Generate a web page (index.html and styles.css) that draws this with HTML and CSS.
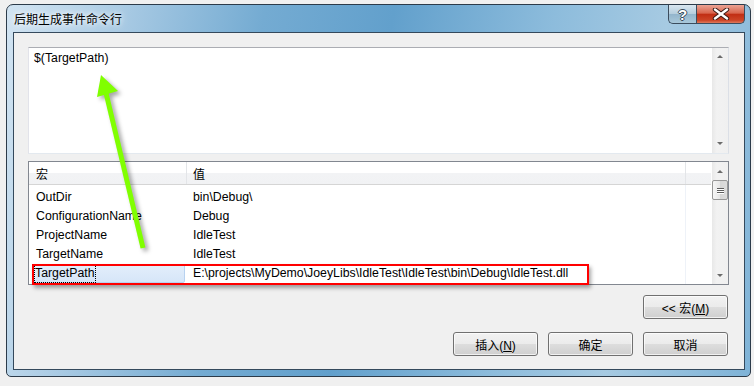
FILE: index.html
```html
<!DOCTYPE html>
<html lang="zh-CN">

<head>
    <meta charset="UTF-8">
    <title>后期生成事件命令行</title>
    <link rel="stylesheet" href="styles.css">
</head>

<body>
    <div class="window">
        <div class="titlebar">
            <span class="title">后期生成事件命令行</span>
            <div class="caption">
                <span class="cap-btn cap-help">?</span>
                <span class="cap-btn cap-close">
                    <svg width="20" height="12" viewBox="0 0 20 12">
                        <path d="M4 1.5 L16 10.5 M16 1.5 L4 10.5" stroke="#3a1a14" stroke-width="4.4" stroke-linecap="round" />
                        <path d="M4 1.5 L16 10.5 M16 1.5 L4 10.5" stroke="#fff" stroke-width="2.4" stroke-linecap="round" />
                    </svg>
                </span>
            </div>
        </div>

        <div class="client">
            <!-- 命令行编辑框 -->
            <div class="editbox">
                <div class="edit-text">$(TargetPath)</div>
                <div class="vscroll">
                    <span class="arr arr-up"></span>
                    <span class="arr arr-down"></span>
                </div>
            </div>

            <!-- 宏列表 -->
            <div class="listview">
                <div class="list-main">
                    <div class="list-head">
                        <div class="col c1">宏</div>
                        <div class="col c2">值</div>
                        <div class="col c3"></div>
                    </div>
                    <div class="list-body">
                        <div class="row"><div class="cell c1">OutDir</div><div class="cell c2">bin\Debug\</div></div>
                        <div class="row"><div class="cell c1">ConfigurationName</div><div class="cell c2">Debug</div></div>
                        <div class="row"><div class="cell c1">ProjectName</div><div class="cell c2">IdleTest</div></div>
                        <div class="row"><div class="cell c1">TargetName</div><div class="cell c2">IdleTest</div></div>
                        <div class="row row-sel"><div class="cell c1"><span class="sel-box"><span class="focus">TargetPath</span></span></div><div class="cell c2">E:\projects\MyDemo\JoeyLibs\IdleTest\IdleTest\bin\Debug\IdleTest.dll</div></div>
                    </div>
                </div>
                <div class="vscroll list-scroll">
                    <span class="arr arr-up"></span>
                    <span class="thumb"><i></i><i></i><i></i></span>
                    <span class="arr arr-down"></span>
                </div>
            </div>

            <div class="btn-row btn-row-macro">
                <button class="btn">&lt;&lt; 宏(<u>M</u>)</button>
            </div>
            <div class="btn-row btn-row-main">
                <button class="btn">插入(<u>N</u>)</button>
                <button class="btn">确定</button>
                <button class="btn">取消</button>
            </div>
        </div>
    </div>

    <!-- 标注：红框和绿色箭头 -->
    <div class="mark-box"></div>
    <svg class="mark-arrow" width="754" height="386" viewBox="0 0 754 386">
        <line x1="106" y1="93" x2="143" y2="248" stroke="#80ff00" stroke-width="5" />
        <polygon points="101,75 118,91 97,97" fill="#80ff00" />
    </svg>
</body>

</html>
```

FILE: styles.css
```css
* {
    margin: 0;
    padding: 0;
    box-sizing: border-box;
}

body {
    background-color: #f0f0f0;
    font-family: "Liberation Sans", "Noto Sans CJK SC", sans-serif;
    font-size: 12.3px;
    color: #000;
    padding: 4px 0 0 6px;
}

/* 窗口外框 */
.window {
    width: 745px;
    height: 373px;
    border: 1px solid #2c3b4a;
    border-radius: 7px 7px 5px 5px;
    padding: 0 5px 6px 6px;
    background: linear-gradient(100deg, #d2e4f2 0%, #aacbe4 14%, #74abd2 32%, #62a0cc 48%, #8dbcdc 68%, #a6cae2 82%, #7fb3d7 100%);
}

/* 标题栏 */
.titlebar {
    display: flex;
    justify-content: space-between;
    height: 27px;
}

.title {
    padding-left: 1px;
    line-height: 27px;
    font-family: "Noto Sans CJK SC", sans-serif;
    font-size: 12px;
    text-shadow: 0 0 5px #fff, 0 0 8px rgba(255, 255, 255, .9);
}

.caption {
    display: flex;
    height: 19px;
}

.cap-btn {
    display: flex;
    align-items: center;
    justify-content: center;
    height: 19px;
    border: 1px solid #3b4c5d;
    border-top: none;
}

.cap-help {
    width: 28px;
    border-right: none;
    border-radius: 0 0 0 5px;
    background: linear-gradient(#d9e6ef, #b4cddd 50%, #93b5cc 51%, #a9c8da);
    color: #fff;
    font-weight: bold;
    font-size: 15px;
    text-shadow: -1px 0 #3a4a58, 1px 0 #3a4a58, 0 1px #3a4a58, 0 -1px #3a4a58;
}

.cap-close {
    width: 49px;
    border-radius: 0 0 5px 0;
    background: linear-gradient(#eba394, #d8654d 45%, #c12e14 52%, #cc4426 85%, #de7a5e);
}

/* 窗口客户区 */
.client {
    height: 338px;
    border: 1px solid #34495c;
    background-color: #f0f0f0;
    padding: 14px 15px 0 14px;
}

/* 编辑框 */
.editbox {
    display: flex;
    height: 107px;
    background-color: #fff;
    border: 1px solid;
    border-color: #abadb3 #dbdfe6 #e3e9ef #e2e3ea;
}

.edit-text {
    flex: 1;
    padding: 3px 5px;
    line-height: 15px;
}

.vscroll {
    position: relative;
    width: 17px;
    background: linear-gradient(to right, #e8e8e8, #f2f2f2 30%, #f0f0f0);
    border-left: 1px solid #fff;
}

.arr {
    position: absolute;
    left: 5px;
    width: 0;
    height: 0;
    border-left: 3px solid transparent;
    border-right: 3px solid transparent;
}

.arr-up {
    top: 7px;
    border-bottom: 3px solid #6b6b6b;
}

.arr-down {
    bottom: 8px;
    border-top: 3px solid #6b6b6b;
}

/* 宏列表 */
.listview {
    display: flex;
    height: 124px;
    margin-top: 7px;
    background-color: #fff;
    border: 1px solid #828790;
}

.list-main {
    flex: 1;
    position: relative;
}

.list-head {
    display: flex;
    height: 23px;
    border-bottom: 1px solid #d5d5d5;
    background: linear-gradient(#fff 50%, #f2f3f5 51%, #f1f2f4);
}

.col {
    padding-top: 1px;
    line-height: 22px;
    border-right: 1px solid #e3e5e8;
    font-family: "Noto Sans CJK SC", sans-serif;
    font-size: 12px;
}

.c1 {
    width: 158px;
    padding-left: 7px;
}

.c2 {
    width: 499px;
    padding-left: 6px;
}

.c3 {
    flex: 1;
    border-right: none;
}

.list-body {
    padding-top: 3px;
    background: linear-gradient(to right, transparent 656px, #eef2f8 656px, #eef2f8 657px, transparent 657px);
    height: 99px;
}

.row {
    display: flex;
    height: 19px;
    line-height: 19px;
}

.cell {
    white-space: nowrap;
}

.row-sel .c1 {
    padding: 0 2px 0 4px;
}

.sel-box {
    display: block;
    height: 19px;
    padding: 0 0 0 2px;
    border: 1px solid #b8d2f0;
    border-radius: 2px;
    background: linear-gradient(#e3eefb, #d6e6f8);
    line-height: 17px;
}

.focus {
    display: inline-block;
    height: 17px;
    padding: 0 1px 0 0;
    margin-left: -1px;
    outline: 1px dotted #000;
}

/* 列表滚动条 */
.list-scroll {
    width: 17px;
}

.list-scroll .arr-up {
    top: 8px;
}

.list-scroll .arr-down {
    bottom: 7px;
}

.thumb {
    position: absolute;
    left: 0;
    top: 18px;
    width: 16px;
    height: 20px;
    border: 1px solid #979797;
    border-radius: 2px;
    background: linear-gradient(to right, #f6f6f6, #e6e6e6 50%, #d6d6d6 51%, #dcdcdc);
    display: flex;
    flex-direction: column;
    align-items: center;
    justify-content: center;
    gap: 1px;
}

.thumb i {
    display: block;
    width: 7px;
    height: 1px;
    background-color: #5c5c5c;
    box-shadow: 0 1px #fff;
}

/* 按钮 */
.btn-row {
    display: flex;
    justify-content: flex-end;
    gap: 10px;
    padding-right: 1px;
}

.btn-row-macro {
    margin-top: 10px;
}

.btn-row-main {
    margin-top: 13px;
}

.btn {
    width: 85px;
    height: 24px;
    border: 1px solid #707070;
    border-radius: 3px;
    background: linear-gradient(#f2f2f2, #ebebeb 50%, #dddddd 51%, #cfcfcf);
    box-shadow: inset 0 0 0 1px rgba(255, 255, 255, .7);
    font-family: "Liberation Sans", "Noto Sans CJK SC", sans-serif;
    font-size: 12px;
    color: #000;
}

/* 标注 */
.mark-box {
    position: absolute;
    left: 32px;
    top: 264px;
    width: 557px;
    height: 21px;
    border: 2px solid #ff0000;
    box-shadow: 2px 3px 4px rgba(0, 0, 0, .35);
}

.mark-arrow {
    position: absolute;
    left: 0;
    top: 0;
    pointer-events: none;
    filter: drop-shadow(3px 3px 2px rgba(0, 0, 0, .35));
}
```
